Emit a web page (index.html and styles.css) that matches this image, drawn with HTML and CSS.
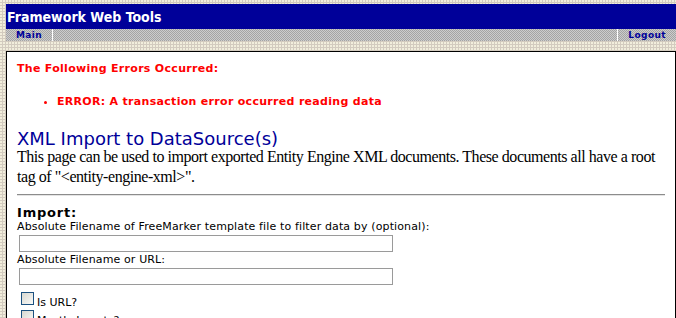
FILE: index.html
```html
<!DOCTYPE html>
<html lang="en">
<head>
  <meta charset="UTF-8">
  <title>Framework Web Tools</title>
  <link rel="stylesheet" href="styles.css">
</head>
<body>
  <!-- Header -->
  <div class="app-header">Framework Web Tools</div>
  <div class="app-nav">
    <a class="nav-link nav-left" href="#">Main</a>
    <a class="nav-link nav-right" href="#">Logout</a>
  </div>

  <!-- Content -->
  <div class="content-box">
    <div class="error-title">The Following Errors Occurred:</div>
    <ul class="error-list">
      <li>ERROR: A transaction error occurred reading data</li>
    </ul>

    <h2 class="page-title">XML Import to DataSource(s)</h2>
    <p class="page-desc">This page can be used to import exported Entity Engine XML documents. These documents all have a root tag of "&lt;entity-engine-xml&gt;".</p>
    <hr class="divider">

    <div class="section-title">Import:</div>
    <form class="import-form">
      <label class="field-label">Absolute Filename of FreeMarker template file to filter data by (optional):</label>
      <input class="text-field" type="text">
      <label class="field-label">Absolute Filename or URL:</label>
      <input class="text-field" type="text">
      <label class="check-row"><span class="check-box"></span>Is URL?</label>
      <label class="check-row"><span class="check-box"></span>Mostly Inserts?</label>
    </form>
  </div>
</body>
</html>
```

FILE: styles.css
```css
/* Basic Reset */
* {
  margin: 0;
  padding: 0;
  box-sizing: border-box;
}

body {
  background: radial-gradient(circle at 1px 1px, #f2eedc 0.7px, transparent 1.1px) 0 0 / 3px 3px, #d3cbbf;
  font-family: "DejaVu Sans", Verdana, sans-serif;
  padding: 4px 0 0 6px;
  height: 318px;
  overflow: hidden;
}

/* Header */
.app-header {
  background-color: #000099;
  color: #ffffff;
  height: 25px;
  font-family: "DejaVu Sans Condensed", "DejaVu Sans", sans-serif;
  font-size: 14px;
  font-weight: bold;
  line-height: 26px;
  padding-left: 1px;
}

.app-nav {
  height: 12px;
  display: flex;
  justify-content: space-between;
  background: repeating-conic-gradient(#a4a4a4 0 25%, #cccccc 0 50%) 0 0 / 2px 2px;
}

.nav-link {
  color: #000099;
  font-size: 9px;
  font-weight: bold;
  letter-spacing: 0.4px;
  text-decoration: none;
  line-height: 12px;
}

.nav-left {
  padding: 0 10px 0 10px;
  border-right: 1px solid #ffffff;
}

.nav-right {
  padding: 0 10px 0 10px;
  border-left: 1px solid #ffffff;
}

/* Content Box */
.content-box {
  margin-top: 10px;
  background-color: #ffffff;
  border: 1px solid #000000;
  border-bottom: none;
  padding: 10px 10px 0 10px;
  height: 300px;
}

.error-title {
  color: #ff0000;
  font-size: 11px;
  font-weight: bold;
  letter-spacing: 0.3px;
  line-height: 14px;
}

.error-list {
  color: #ff0000;
  font-size: 11px;
  font-weight: bold;
  letter-spacing: 0.3px;
  margin: 19px 0 0 40px;
  line-height: 14px;
}

.page-title {
  color: #000099;
  font-size: 18px;
  font-weight: normal;
  line-height: 16px;
  margin-top: 22px;
}

.page-desc {
  font-family: "Liberation Serif", "Times New Roman", serif;
  font-size: 16px;
  letter-spacing: -0.45px;
  line-height: 20px;
}

.divider {
  border: none;
  border-top: 1px solid #8c8c8c;
  border-bottom: 1px solid #e4e4e4;
  margin: 7px 0 9px 0;
}

.section-title {
  font-size: 13px;
  font-weight: bold;
  letter-spacing: 0.8px;
  line-height: 15px;
}

/* Form */
.import-form {
  display: flex;
  flex-direction: column;
  align-items: flex-start;
}

.field-label {
  font-size: 11px;
  letter-spacing: 0.13px;
  line-height: 13px;
}

.text-field {
  width: 374px;
  height: 17px;
  margin: 2px 0 1px 2px;
  border: 1px solid #9a9a9a;
  background: #ffffff;
}

.check-row {
  display: flex;
  align-items: flex-end;
  font-size: 11px;
  line-height: 13px;
  margin: 6px 0 0 4px;
}

.check-row + .check-row {
  margin-top: 1px;
}

.check-box {
  width: 13px;
  height: 13px;
  border: 1px solid #1c5180;
  background: linear-gradient(135deg, #d8d8d0, #fafaf8);
  margin: 0 3px 4px 0;
}
```
